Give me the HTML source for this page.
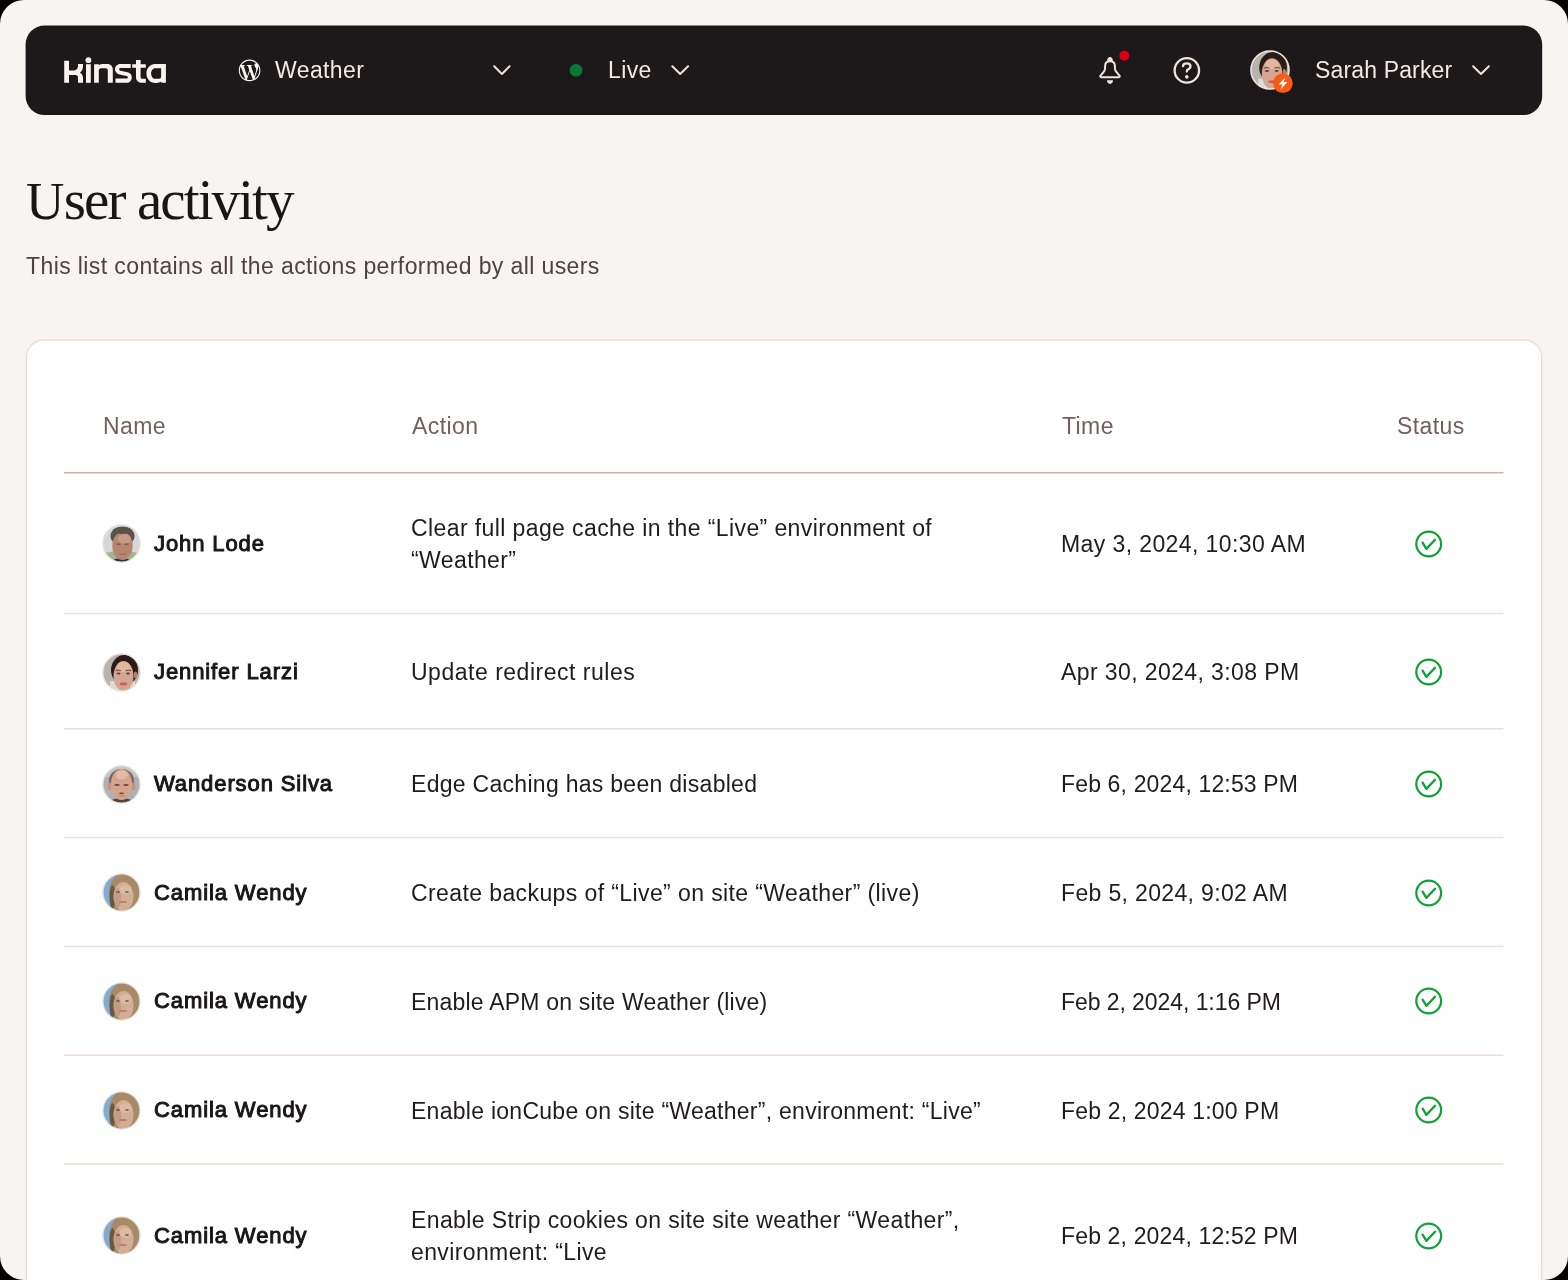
<!DOCTYPE html>
<html><head><meta charset="utf-8">
<style>
html,body{margin:0;padding:0;background:#000;width:1568px;height:1280px;overflow:hidden;}
*{box-sizing:border-box;}
.page{position:absolute;left:0;top:0;width:1568px;height:1280px;border-radius:24px;background:#f8f4f1;overflow:hidden;font-family:"Liberation Sans",sans-serif;}
.abs{position:absolute;white-space:nowrap;}

.t{will-change:transform;position:absolute;white-space:nowrap;font-size:23px;line-height:26px;letter-spacing:0.4px;}
.navtxt{color:#f2eae2;}
.h1{position:absolute;left:26px;top:170px;font-family:"Liberation Serif",serif;font-size:53px;color:#1b1616;line-height:60px;letter-spacing:-0.5px;white-space:nowrap;}
.sub{left:26px;top:253px;color:#4d4441;}

.th{color:#73605d;top:413.3px;}


.name{left:154px;font-size:22px;color:#1b1616;letter-spacing:0.9px;-webkit-text-stroke:1px #1b1616;}
.act{left:411px;color:#211b1b;line-height:32px;}
.time{left:1061px;color:#211b1b;}
.av{position:absolute;left:102px;width:39px;height:39px;}
.ck{position:absolute;left:1414px;width:30px;height:30px;}
</style></head>
<body>
<div class="page">
<svg class="abs" style="left:0;top:0" width="1568" height="130" viewBox="0 0 1568 130"><rect x="25.6" y="25.5" width="1516.6" height="89.6" rx="19" fill="#1d191a"/></svg>
<svg class="abs" style="left:0;top:0" width="1568" height="130" viewBox="0 0 1568 130">
<g fill="#f8f3ef">
<path d="M64.2 60.8 H69 V70.6 H73.5 C76 70.6 78 68.5 78 66 V64.1 H83 V66 C83 69 81.8 71.2 79.9 72.6 C81.8 73.8 83 75.5 83 78 V82.8 H78 V77.5 C78 76 77 75 75.5 75 H69 V82.8 H64.2 Z"/>
<rect x="86" y="64.2" width="4.8" height="18.6"/><circle cx="88.4" cy="60.2" r="2.9"/>
<path d="M94.1 64.2 H98.8 V65.3 C99.8 64.5 101 64.1 102.5 64.1 H107.5 C110.5 64.1 112.8 66.4 112.8 69.4 V82.8 H107.8 V70.3 C107.8 69.1 107 68.3 105.8 68.3 H101 C99.8 68.3 98.8 69.3 98.8 70.5 V82.8 H94.1 Z"/>
<path d="M130.7 64.1 V68.1 H120.5 C119.6 68.1 119.2 68.6 119.2 69.3 C119.2 70 119.7 70.5 120.5 70.7 L127.5 72.3 C130.2 72.9 131.8 74.8 131.8 77.4 C131.8 80.4 129.6 82.8 126.6 82.8 H115.5 V78.6 H126.6 C127.4 78.6 127.8 78.1 127.8 77.4 C127.8 76.8 127.3 76.3 126.5 76.1 L119.4 74.5 C116.8 73.9 115 71.9 115 69.3 C115 66.4 117.3 64.1 120.2 64.1 Z"/>
<path d="M136 60 H140.6 V64.2 H145.8 V67.7 H140.6 V77 C140.6 78.1 141.3 78.8 142.4 78.8 H145.8 V82.8 H141.5 C138.4 82.8 136 80.4 136 77.3 V67.7 H132.2 V64.2 H136 Z"/>
<path fill-rule="evenodd" d="M165.9 64.1 V82.8 H161.3 V81.6 C160 82.5 158.4 83 156.6 83 H155.2 C150.3 83 146.4 78.8 146.4 73.5 C146.4 68.3 150.3 64.1 155.2 64.1 Z M161.1 68.3 H155.2 C152.9 68.3 151.1 70.6 151.1 73.5 C151.1 76.5 152.9 78.8 155.2 78.8 H159.1 C160.2 78.8 161.1 77.9 161.1 76.8 Z"/>
</g>
<g transform="translate(238.8 59.6) scale(0.9)" fill="#f8f3ef"><path d="M21.469 6.825c.84 1.537 1.318 3.3 1.318 5.175 0 3.979-2.156 7.456-5.363 9.325l3.295-9.527c.615-1.54.82-2.771.82-3.864 0-.405-.026-.78-.07-1.11m-7.981.105c.647-.03 1.232-.105 1.232-.105.582-.075.514-.93-.067-.899 0 0-1.755.135-2.88.135-1.064 0-2.85-.15-2.85-.15-.585-.03-.661.855-.075.885 0 0 .54.061 1.125.09l1.68 4.605-2.37 7.08L5.354 6.9c.649-.03 1.234-.1 1.234-.1.585-.075.516-.93-.065-.896 0 0-1.746.138-2.874.138-.2 0-.438-.008-.69-.015C4.911 3.15 8.235 1.215 12 1.215c2.809 0 5.365 1.072 7.286 2.833-.046-.003-.091-.009-.141-.009-1.06 0-1.812.923-1.812 1.914 0 .89.513 1.643 1.06 2.531.411.72.89 1.643.89 2.977 0 .915-.354 1.994-.821 3.479l-1.075 3.585-3.9-11.61.001.014zM12 22.784c-1.059 0-2.081-.153-3.048-.437l3.237-9.406 3.315 9.087c.024.053.05.101.078.149-1.12.393-2.325.609-3.582.609M1.211 12c0-1.564.336-3.05.935-4.39L7.29 21.709C3.694 19.96 1.212 16.271 1.211 12M12 0C5.385 0 0 5.385 0 12s5.385 12 12 12 12-5.385 12-12S18.615 0 12 0"/></g>
<g fill="none" stroke="#eee3d9" stroke-width="2" stroke-linecap="round" stroke-linejoin="round">
<path d="M494.2 66.2 L501.9 74 L509.6 66.2"/>
<path d="M672.3 66.2 L680.2 74 L688.1 66.2"/>
<path d="M1473.1 66.2 L1481 74 L1488.9 66.2"/>
</g>
<circle cx="576" cy="70.3" r="6.3" fill="#08793a"/>
<g fill="none" stroke="#efe4da" stroke-width="2" stroke-linejoin="round">
<path d="M1101.2 77.2 C1100.3 77.2 1099.9 76.3 1100.5 75.6 L1103.3 72.4 C1104.5 71.1 1105.1 69.6 1105.1 67.9 V66 C1105.1 63 1106.9 61.2 1110 61.2 C1113.1 61.2 1114.9 63 1114.9 66 V67.9 C1114.9 69.6 1115.5 71.1 1116.7 72.4 L1119.5 75.6 C1120.1 76.3 1119.7 77.2 1118.8 77.2 Z"/>
</g>
<g fill="#efe4da">
<path d="M1107 61.2 C1107 58.6 1108.3 56.9 1110 56.9 C1111.7 56.9 1113 58.6 1113 61.2 Z"/>
<path d="M1107 80.3 H1113 C1113 82.5 1111.7 83.9 1110 83.9 C1108.3 83.9 1107 82.5 1107 80.3 Z"/>
</g>
<circle cx="1124.3" cy="55.8" r="5" fill="#d9000c"/>
<g fill="none" stroke="#efe4da" stroke-width="2.3" stroke-linecap="round">
<circle cx="1186.85" cy="70.4" r="12.2"/>
<path d="M1183 66.2 C1183 64.3 1184.7 63.4 1186.8 63.4 C1189 63.4 1190.5 64.8 1190.5 66.5 C1190.5 68.3 1189 68.8 1187.8 69.6 C1187 70.1 1186.8 70.6 1186.8 71.6"/>
</g>
<circle cx="1186.8" cy="76.9" r="1.8" fill="#efe4da"/>
</svg>
<svg class="abs" style="left:1250px;top:50px" width="40" height="40" viewBox="0 0 39 39"><defs><clipPath id="cs"><circle cx="19.5" cy="19.5" r="18.5"/></clipPath></defs><g clip-path="url(#cs)"><rect width="39" height="39" fill="#b7b3af"/>
<rect x="8" y="28" width="25" height="12" fill="#dedad6"/>
<ellipse cx="22.5" cy="17" rx="13.5" ry="15" fill="#2a1b16"/>
<ellipse cx="21.5" cy="23" rx="10" ry="15" fill="#d6a58f"/>
<ellipse cx="21.5" cy="14" rx="6.5" ry="5" fill="#e0b8a2"/>
<ellipse cx="33.5" cy="22" rx="1.6" ry="3.5" fill="#b98066"/>
<path d="M13.5 17.6 Q16.5 16.6 19 17.6" stroke="#5a3f36" stroke-width="0.9" fill="none"/><path d="M23.5 17.6 Q26.5 16.6 29 17.6" stroke="#5a3f36" stroke-width="0.9" fill="none"/>
<ellipse cx="16.5" cy="20.5" rx="2" ry="0.9" fill="#4e4648"/><ellipse cx="26" cy="20.5" rx="2" ry="0.9" fill="#4e4648"/>
<ellipse cx="21.5" cy="31" rx="3.8" ry="1.4" fill="#c65f66"/></g><circle cx="19.5" cy="19.5" r="18.6" fill="none" stroke="#efe6de" stroke-width="1.5"/></svg>
<svg class="abs" style="left:1272px;top:73px" width="22" height="22" viewBox="0 0 22 22"><circle cx="10.9" cy="10.3" r="9.8" fill="#fa5b14"/><path d="M13.5 3.9 L6.7 11.5 H10.6 L8.3 16.9 L15.3 9.0 H11.4 Z" fill="#fff"/></svg>
<div class="t navtxt" style="left:275px;top:57px">Weather</div>
<div class="t navtxt" style="left:608px;top:57px">Live</div>
<div class="t navtxt" style="left:1315px;top:57px;letter-spacing:0.15px">Sarah Parker</div>
<div class="h1">U<span style="font-size:57px;letter-spacing:-1.9px">ser activity</span></div>
<div class="t sub">This list contains all the actions performed by all users</div>
<svg class="abs" style="left:0;top:300px" width="1568" height="980" viewBox="0 300 1568 980"><rect x="26.4" y="340" width="1515.3" height="1100" rx="17.5" fill="#fff" stroke="#eaded6" stroke-width="1.4"/><rect x="64" y="472" width="1439.5" height="1.5" fill="#c8b1a9"/><rect x="64" y="612.75" width="1439.5" height="1.5" fill="#eaddd5"/><rect x="64" y="728.05" width="1439.5" height="1.5" fill="#eaddd5"/><rect x="64" y="836.75" width="1439.5" height="1.5" fill="#eaddd5"/><rect x="64" y="945.65" width="1439.5" height="1.5" fill="#eaddd5"/><rect x="64" y="1054.45" width="1439.5" height="1.5" fill="#eaddd5"/><rect x="64" y="1163.25" width="1439.5" height="1.5" fill="#eaddd5"/></svg>
<div class="t th" style="left:103px">Name</div>
<div class="t th" style="left:412px">Action</div>
<div class="t th" style="left:1062px">Time</div>
<div class="t th" style="left:1397px">Status</div>
<div class="av" style="top:524.3px"><svg width="39" height="39" viewBox="0 0 39 39"><defs><clipPath id="c0"><circle cx="19.5" cy="19.5" r="18.5"/></clipPath></defs><g clip-path="url(#c0)"><rect width="39" height="39" fill="#d3d8da"/><ellipse cx="19.5" cy="33" rx="22" ry="6" fill="#a3b58b"/>
<path d="M9 39 C11 35 14 34.5 19.5 34.5 C25 34.5 28 35 30 39 Z" fill="#2a3247"/>
<ellipse cx="20.5" cy="12" rx="12" ry="9.5" fill="#5a524b"/>
<ellipse cx="20.5" cy="22" rx="10.2" ry="14" fill="#b68670"/>
<ellipse cx="22.5" cy="15" rx="6.5" ry="5" fill="#c89c84"/>
<ellipse cx="20.5" cy="6.5" rx="9.5" ry="3.5" fill="#5a524b"/>
<rect x="14.5" y="19.5" width="4" height="1.3" fill="#7a5646"/><rect x="22.5" y="19.5" width="4" height="1.3" fill="#7a5646"/>
<rect x="17.5" y="29.5" width="7" height="1.4" rx="0.7" fill="#9a6a5a"/></g><circle cx="19.5" cy="19.5" r="18.6" fill="none" stroke="#ecdfd5" stroke-width="1.3"/></svg></div>
<div class="t name" style="top:530.8px">John Lode</div>
<div class="t act" style="top:512.4px;letter-spacing:0.4px">Clear full page cache in the “Live” environment of<br>“Weather”</div>
<div class="t time" style="top:531.2px;letter-spacing:0.4px">May 3, 2024, 10:30 AM</div>
<svg class="ck" style="top:528.8px" viewBox="0 0 30 30"><circle cx="14.7" cy="15" r="12.4" fill="none" stroke="#0fa236" stroke-width="2.2"/><path d="M8.6 13.6 L12.4 19.9 L21 10.8" fill="none" stroke="#0fa236" stroke-width="2.3" stroke-linecap="round" stroke-linejoin="round"/></svg>
<div class="av" style="top:652.5px"><svg width="39" height="39" viewBox="0 0 39 39"><defs><clipPath id="c1"><circle cx="19.5" cy="19.5" r="18.5"/></clipPath></defs><g clip-path="url(#c1)"><rect width="39" height="39" fill="#b7b3af"/>
<rect x="8" y="28" width="25" height="12" fill="#dedad6"/>
<ellipse cx="22.5" cy="17" rx="13.5" ry="15" fill="#2a1b16"/>
<ellipse cx="21.5" cy="23" rx="10" ry="15" fill="#d6a58f"/>
<ellipse cx="21.5" cy="14" rx="6.5" ry="5" fill="#e0b8a2"/>
<ellipse cx="33.5" cy="22" rx="1.6" ry="3.5" fill="#b98066"/>
<path d="M13.5 17.6 Q16.5 16.6 19 17.6" stroke="#5a3f36" stroke-width="0.9" fill="none"/><path d="M23.5 17.6 Q26.5 16.6 29 17.6" stroke="#5a3f36" stroke-width="0.9" fill="none"/>
<ellipse cx="16.5" cy="20.5" rx="2" ry="0.9" fill="#4e4648"/><ellipse cx="26" cy="20.5" rx="2" ry="0.9" fill="#4e4648"/>
<ellipse cx="21.5" cy="31" rx="3.8" ry="1.4" fill="#c65f66"/></g><circle cx="19.5" cy="19.5" r="18.6" fill="none" stroke="#ecdfd5" stroke-width="1.3"/></svg></div>
<div class="t name" style="top:659.0px">Jennifer Larzi</div>
<div class="t act" style="top:656.4px;letter-spacing:0.51px">Update redirect rules</div>
<div class="t time" style="top:659.4px;letter-spacing:0.4px">Apr 30, 2024, 3:08 PM</div>
<svg class="ck" style="top:657.0px" viewBox="0 0 30 30"><circle cx="14.7" cy="15" r="12.4" fill="none" stroke="#0fa236" stroke-width="2.2"/><path d="M8.6 13.6 L12.4 19.9 L21 10.8" fill="none" stroke="#0fa236" stroke-width="2.3" stroke-linecap="round" stroke-linejoin="round"/></svg>
<div class="av" style="top:764.5px"><svg width="39" height="39" viewBox="0 0 39 39"><defs><clipPath id="c2"><circle cx="19.5" cy="19.5" r="18.5"/></clipPath></defs><g clip-path="url(#c2)"><rect width="39" height="39" fill="#aab2b8"/><rect width="39" height="12" fill="#c0c6ca"/>
<path d="M6 39 C9 34 13 33.5 19.5 33.5 C26 33.5 30 34 33 39 Z" fill="#4b463c"/>
<ellipse cx="19.5" cy="15.5" rx="12.5" ry="11.5" fill="#7b6a5c"/>
<ellipse cx="7.8" cy="21.5" rx="2.3" ry="3.8" fill="#c8927a"/><ellipse cx="31.2" cy="21.5" rx="2.3" ry="3.8" fill="#c8927a"/>
<ellipse cx="19.5" cy="19.5" rx="10.6" ry="15.5" fill="#d6a48c"/>
<ellipse cx="20" cy="10" rx="6" ry="4.5" fill="#e6c3b0" opacity="0.75"/>
<ellipse cx="15" cy="20" rx="2.8" ry="0.9" fill="#6a4a3e"/><ellipse cx="24" cy="20" rx="2.8" ry="0.9" fill="#6a4a3e"/>
<ellipse cx="19.5" cy="28.3" rx="2.6" ry="0.9" fill="#6e4c40"/>
<ellipse cx="19.5" cy="30.8" rx="4" ry="0.9" fill="#c98e84"/></g><circle cx="19.5" cy="19.5" r="18.6" fill="none" stroke="#ecdfd5" stroke-width="1.3"/></svg></div>
<div class="t name" style="top:771.0px">Wanderson Silva</div>
<div class="t act" style="top:768.4px;letter-spacing:0.29px">Edge Caching has been disabled</div>
<div class="t time" style="top:771.4px;letter-spacing:0.15px">Feb 6, 2024, 12:53 PM</div>
<svg class="ck" style="top:769.0px" viewBox="0 0 30 30"><circle cx="14.7" cy="15" r="12.4" fill="none" stroke="#0fa236" stroke-width="2.2"/><path d="M8.6 13.6 L12.4 19.9 L21 10.8" fill="none" stroke="#0fa236" stroke-width="2.3" stroke-linecap="round" stroke-linejoin="round"/></svg>
<div class="av" style="top:873.0px"><svg width="39" height="39" viewBox="0 0 39 39"><defs><clipPath id="c3"><circle cx="19.5" cy="19.5" r="18.5"/></clipPath></defs><g clip-path="url(#c3)"><rect width="39" height="39" fill="#7eaed6"/>
<ellipse cx="22" cy="20" rx="15" ry="20" fill="#a88b66"/>
<ellipse cx="10.5" cy="24" rx="3" ry="12" fill="#6e5740"/>
<ellipse cx="21.5" cy="23.5" rx="10" ry="14.5" fill="#d3ae94"/>
<ellipse cx="15.5" cy="25" rx="3.5" ry="10" fill="#b58e74" opacity="0.55"/>
<ellipse cx="23.5" cy="17" rx="6" ry="5" fill="#dfbea5" opacity="0.8"/>
<ellipse cx="16" cy="19" rx="2" ry="0.8" fill="#4a4a4e"/><ellipse cx="25" cy="19" rx="2" ry="0.8" fill="#4a4a4e"/>
<ellipse cx="21" cy="29" rx="4" ry="1.1" fill="#b87a72"/></g><circle cx="19.5" cy="19.5" r="18.6" fill="none" stroke="#ecdfd5" stroke-width="1.3"/></svg></div>
<div class="t name" style="top:879.5px">Camila Wendy</div>
<div class="t act" style="top:876.9px;letter-spacing:0.4px">Create backups of “Live” on site “Weather” (live)</div>
<div class="t time" style="top:879.9px;letter-spacing:0.35px">Feb 5, 2024, 9:02 AM</div>
<svg class="ck" style="top:877.5px" viewBox="0 0 30 30"><circle cx="14.7" cy="15" r="12.4" fill="none" stroke="#0fa236" stroke-width="2.2"/><path d="M8.6 13.6 L12.4 19.9 L21 10.8" fill="none" stroke="#0fa236" stroke-width="2.3" stroke-linecap="round" stroke-linejoin="round"/></svg>
<div class="av" style="top:981.8px"><svg width="39" height="39" viewBox="0 0 39 39"><defs><clipPath id="c4"><circle cx="19.5" cy="19.5" r="18.5"/></clipPath></defs><g clip-path="url(#c4)"><rect width="39" height="39" fill="#7eaed6"/>
<ellipse cx="22" cy="20" rx="15" ry="20" fill="#a88b66"/>
<ellipse cx="10.5" cy="24" rx="3" ry="12" fill="#6e5740"/>
<ellipse cx="21.5" cy="23.5" rx="10" ry="14.5" fill="#d3ae94"/>
<ellipse cx="15.5" cy="25" rx="3.5" ry="10" fill="#b58e74" opacity="0.55"/>
<ellipse cx="23.5" cy="17" rx="6" ry="5" fill="#dfbea5" opacity="0.8"/>
<ellipse cx="16" cy="19" rx="2" ry="0.8" fill="#4a4a4e"/><ellipse cx="25" cy="19" rx="2" ry="0.8" fill="#4a4a4e"/>
<ellipse cx="21" cy="29" rx="4" ry="1.1" fill="#b87a72"/></g><circle cx="19.5" cy="19.5" r="18.6" fill="none" stroke="#ecdfd5" stroke-width="1.3"/></svg></div>
<div class="t name" style="top:988.3px">Camila Wendy</div>
<div class="t act" style="top:985.7px;letter-spacing:0.2px">Enable APM on site Weather (live)</div>
<div class="t time" style="top:988.7px;letter-spacing:-0.07px">Feb 2, 2024, 1:16 PM</div>
<svg class="ck" style="top:986.3px" viewBox="0 0 30 30"><circle cx="14.7" cy="15" r="12.4" fill="none" stroke="#0fa236" stroke-width="2.2"/><path d="M8.6 13.6 L12.4 19.9 L21 10.8" fill="none" stroke="#0fa236" stroke-width="2.3" stroke-linecap="round" stroke-linejoin="round"/></svg>
<div class="av" style="top:1090.6px"><svg width="39" height="39" viewBox="0 0 39 39"><defs><clipPath id="c5"><circle cx="19.5" cy="19.5" r="18.5"/></clipPath></defs><g clip-path="url(#c5)"><rect width="39" height="39" fill="#7eaed6"/>
<ellipse cx="22" cy="20" rx="15" ry="20" fill="#a88b66"/>
<ellipse cx="10.5" cy="24" rx="3" ry="12" fill="#6e5740"/>
<ellipse cx="21.5" cy="23.5" rx="10" ry="14.5" fill="#d3ae94"/>
<ellipse cx="15.5" cy="25" rx="3.5" ry="10" fill="#b58e74" opacity="0.55"/>
<ellipse cx="23.5" cy="17" rx="6" ry="5" fill="#dfbea5" opacity="0.8"/>
<ellipse cx="16" cy="19" rx="2" ry="0.8" fill="#4a4a4e"/><ellipse cx="25" cy="19" rx="2" ry="0.8" fill="#4a4a4e"/>
<ellipse cx="21" cy="29" rx="4" ry="1.1" fill="#b87a72"/></g><circle cx="19.5" cy="19.5" r="18.6" fill="none" stroke="#ecdfd5" stroke-width="1.3"/></svg></div>
<div class="t name" style="top:1097.1px">Camila Wendy</div>
<div class="t act" style="top:1094.5px;letter-spacing:0.27px">Enable ionCube on site “Weather”, environment: “Live”</div>
<div class="t time" style="top:1097.5px;letter-spacing:0.18px">Feb 2, 2024 1:00 PM</div>
<svg class="ck" style="top:1095.1px" viewBox="0 0 30 30"><circle cx="14.7" cy="15" r="12.4" fill="none" stroke="#0fa236" stroke-width="2.2"/><path d="M8.6 13.6 L12.4 19.9 L21 10.8" fill="none" stroke="#0fa236" stroke-width="2.3" stroke-linecap="round" stroke-linejoin="round"/></svg>
<div class="av" style="top:1216.0px"><svg width="39" height="39" viewBox="0 0 39 39"><defs><clipPath id="c6"><circle cx="19.5" cy="19.5" r="18.5"/></clipPath></defs><g clip-path="url(#c6)"><rect width="39" height="39" fill="#7eaed6"/>
<ellipse cx="22" cy="20" rx="15" ry="20" fill="#a88b66"/>
<ellipse cx="10.5" cy="24" rx="3" ry="12" fill="#6e5740"/>
<ellipse cx="21.5" cy="23.5" rx="10" ry="14.5" fill="#d3ae94"/>
<ellipse cx="15.5" cy="25" rx="3.5" ry="10" fill="#b58e74" opacity="0.55"/>
<ellipse cx="23.5" cy="17" rx="6" ry="5" fill="#dfbea5" opacity="0.8"/>
<ellipse cx="16" cy="19" rx="2" ry="0.8" fill="#4a4a4e"/><ellipse cx="25" cy="19" rx="2" ry="0.8" fill="#4a4a4e"/>
<ellipse cx="21" cy="29" rx="4" ry="1.1" fill="#b87a72"/></g><circle cx="19.5" cy="19.5" r="18.6" fill="none" stroke="#ecdfd5" stroke-width="1.3"/></svg></div>
<div class="t name" style="top:1222.5px">Camila Wendy</div>
<div class="t act" style="top:1204.1px;letter-spacing:0.38px">Enable Strip cookies on site site weather “Weather”,<br>environment: “Live</div>
<div class="t time" style="top:1222.9px;letter-spacing:0.15px">Feb 2, 2024, 12:52 PM</div>
<svg class="ck" style="top:1220.5px" viewBox="0 0 30 30"><circle cx="14.7" cy="15" r="12.4" fill="none" stroke="#0fa236" stroke-width="2.2"/><path d="M8.6 13.6 L12.4 19.9 L21 10.8" fill="none" stroke="#0fa236" stroke-width="2.3" stroke-linecap="round" stroke-linejoin="round"/></svg>
</div>
</body></html>
